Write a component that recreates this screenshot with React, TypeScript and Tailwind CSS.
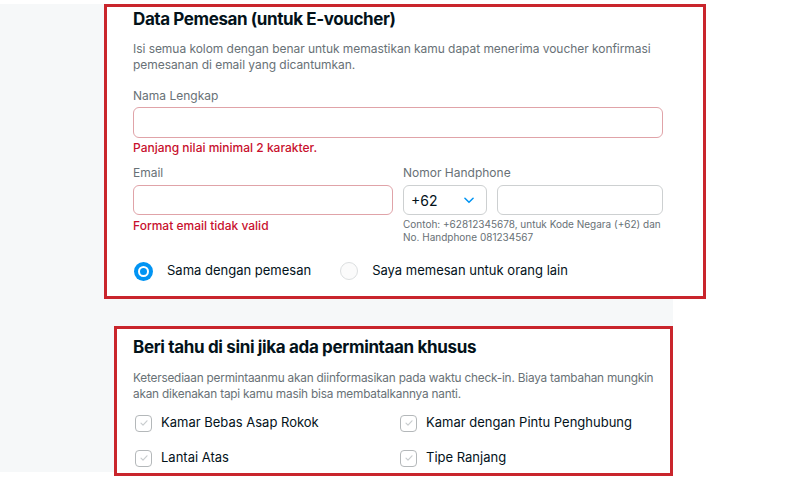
import React from 'react';

const font = { fontFamily: 'Inter, "Noto Sans", sans-serif' };

const CheckItem: React.FC<{ label: string }> = ({ label }) => (
  <div className="flex items-center h-[20px]">
    <span className="w-[17px] h-[17px] rounded-[4px] border border-[#b4b8ba] bg-white flex items-center justify-center">
      <svg width="10" height="10" viewBox="0 0 10 10" fill="none">
        <path d="M2 5.2l2 2 4-4.4" stroke="#c9cdcf" strokeWidth="1.2" strokeLinecap="round" strokeLinejoin="round" />
      </svg>
    </span>
    <span className="ml-[9px] text-[13px] text-[#03121a]">{label}</span>
  </div>
);

export default function App() {
  return (
    <div className="w-[800px] h-[500px] bg-white overflow-hidden" style={font}>
      <div className="w-[673px] h-[468px] mt-[4px] bg-[#f6f8f9] flex flex-col">
        {/* Data Pemesan */}
        <div className="ml-[104px] w-[602px] h-[295px] border-[3px] border-[#c9252c] bg-white pl-[26px] pr-[40px] shrink-0">
          <h2 className="text-[17px] leading-[24px] font-bold tracking-[-0.4px] text-[#03121a]">Data Pemesan (untuk E-voucher)</h2>
          <p className="mt-[10px] text-[12px] leading-[16px] tracking-[-0.05px] text-[#687176]">
            Isi semua kolom dengan benar untuk memastikan kamu dapat menerima voucher konfirmasi pemesanan di email yang dicantumkan.
          </p>

          <div className="mt-[15px] text-[12px] leading-[16px] text-[#687176]">Nama Lengkap</div>
          <div className="mt-[3px] h-[31px] w-[530px] rounded-[6px] border border-[#e0a3a8] bg-white" />
          <div className="mt-[2px] text-[12px] leading-[16px] font-medium text-[#c8102e]">Panjang nilai minimal 2 karakter.</div>

          <div className="mt-[9px] flex gap-[10px]">
            <div className="w-[260px] shrink-0">
              <div className="text-[12px] leading-[16px] text-[#687176]">Email</div>
              <div className="mt-[4px] h-[30px] rounded-[6px] border border-[#e0a3a8] bg-white" />
              <div className="mt-[3px] text-[12px] leading-[16px] font-medium text-[#c8102e]">Format email tidak valid</div>
            </div>
            <div className="w-[262px] shrink-0">
              <div className="text-[12px] leading-[16px] text-[#687176]">Nomor Handphone</div>
              <div className="mt-[4px] flex gap-[10px]">
                <div className="w-[84px] h-[30px] rounded-[6px] border border-[#cdd0d1] bg-white flex items-center justify-between pl-[7px] pr-[10px]">
                  <span className="text-[14px] text-[#03121a]">+62</span>
                  <svg width="14" height="14" viewBox="0 0 24 24" fill="none">
                    <path d="M5 9l7 7 7-7" stroke="#0194f3" strokeWidth="2.6" strokeLinecap="round" strokeLinejoin="round" />
                  </svg>
                </div>
                <div className="w-[166px] h-[30px] rounded-[6px] border border-[#cdd0d1] bg-white" />
              </div>
              <p className="mt-[3px] text-[10px] leading-[13px] text-[#687176]">
                Contoh: +62812345678, untuk Kode Negara (+62) dan No. Handphone 081234567
              </p>
            </div>
          </div>

          <div className="mt-[17px] flex items-center h-[20px]">
            <span className="ml-[1px] w-[19px] h-[19px] rounded-full bg-[#0194f3] flex items-center justify-center">
              <span className="w-[11px] h-[11px] rounded-full border-[2.5px] border-white bg-[#0194f3]" />
            </span>
            <span className="ml-[14px] text-[13px] text-[#03121a]">Sama dengan pemesan</span>
            <span className="ml-[29px] w-[18px] h-[18px] rounded-full border border-[#dcdfe0] bg-[#fbfbfb]" />
            <span className="ml-[14px] text-[13px] text-[#03121a]">Saya memesan untuk orang lain</span>
          </div>
        </div>

        {/* Permintaan khusus */}
        <div className="mt-[27px] ml-[114px] w-[559px] h-[150px] border-[3px] border-[#c9252c] bg-white pl-[16px] pr-0 shrink-0">
          <h2 className="pt-[6px] text-[17px] leading-[24px] font-bold tracking-[-0.35px] text-[#03121a]">Beri tahu di sini jika ada permintaan khusus</h2>
          <p className="mt-[11px] text-[11.8px] leading-[16px] tracking-[-0.2px] text-[#687176]">
            Ketersediaan permintaanmu akan diinformasikan pada waktu check-in. Biaya tambahan mungkin akan dikenakan tapi kamu masih bisa membatalkannya nanti.
          </p>
          <div className="mt-[11px] ml-[2px] grid grid-cols-[265px_1fr] gap-y-[15px]">
            <CheckItem label="Kamar Bebas Asap Rokok" />
            <CheckItem label="Kamar dengan Pintu Penghubung" />
            <CheckItem label="Lantai Atas" />
            <CheckItem label="Tipe Ranjang" />
          </div>
        </div>
      </div>
    </div>
  );
}
